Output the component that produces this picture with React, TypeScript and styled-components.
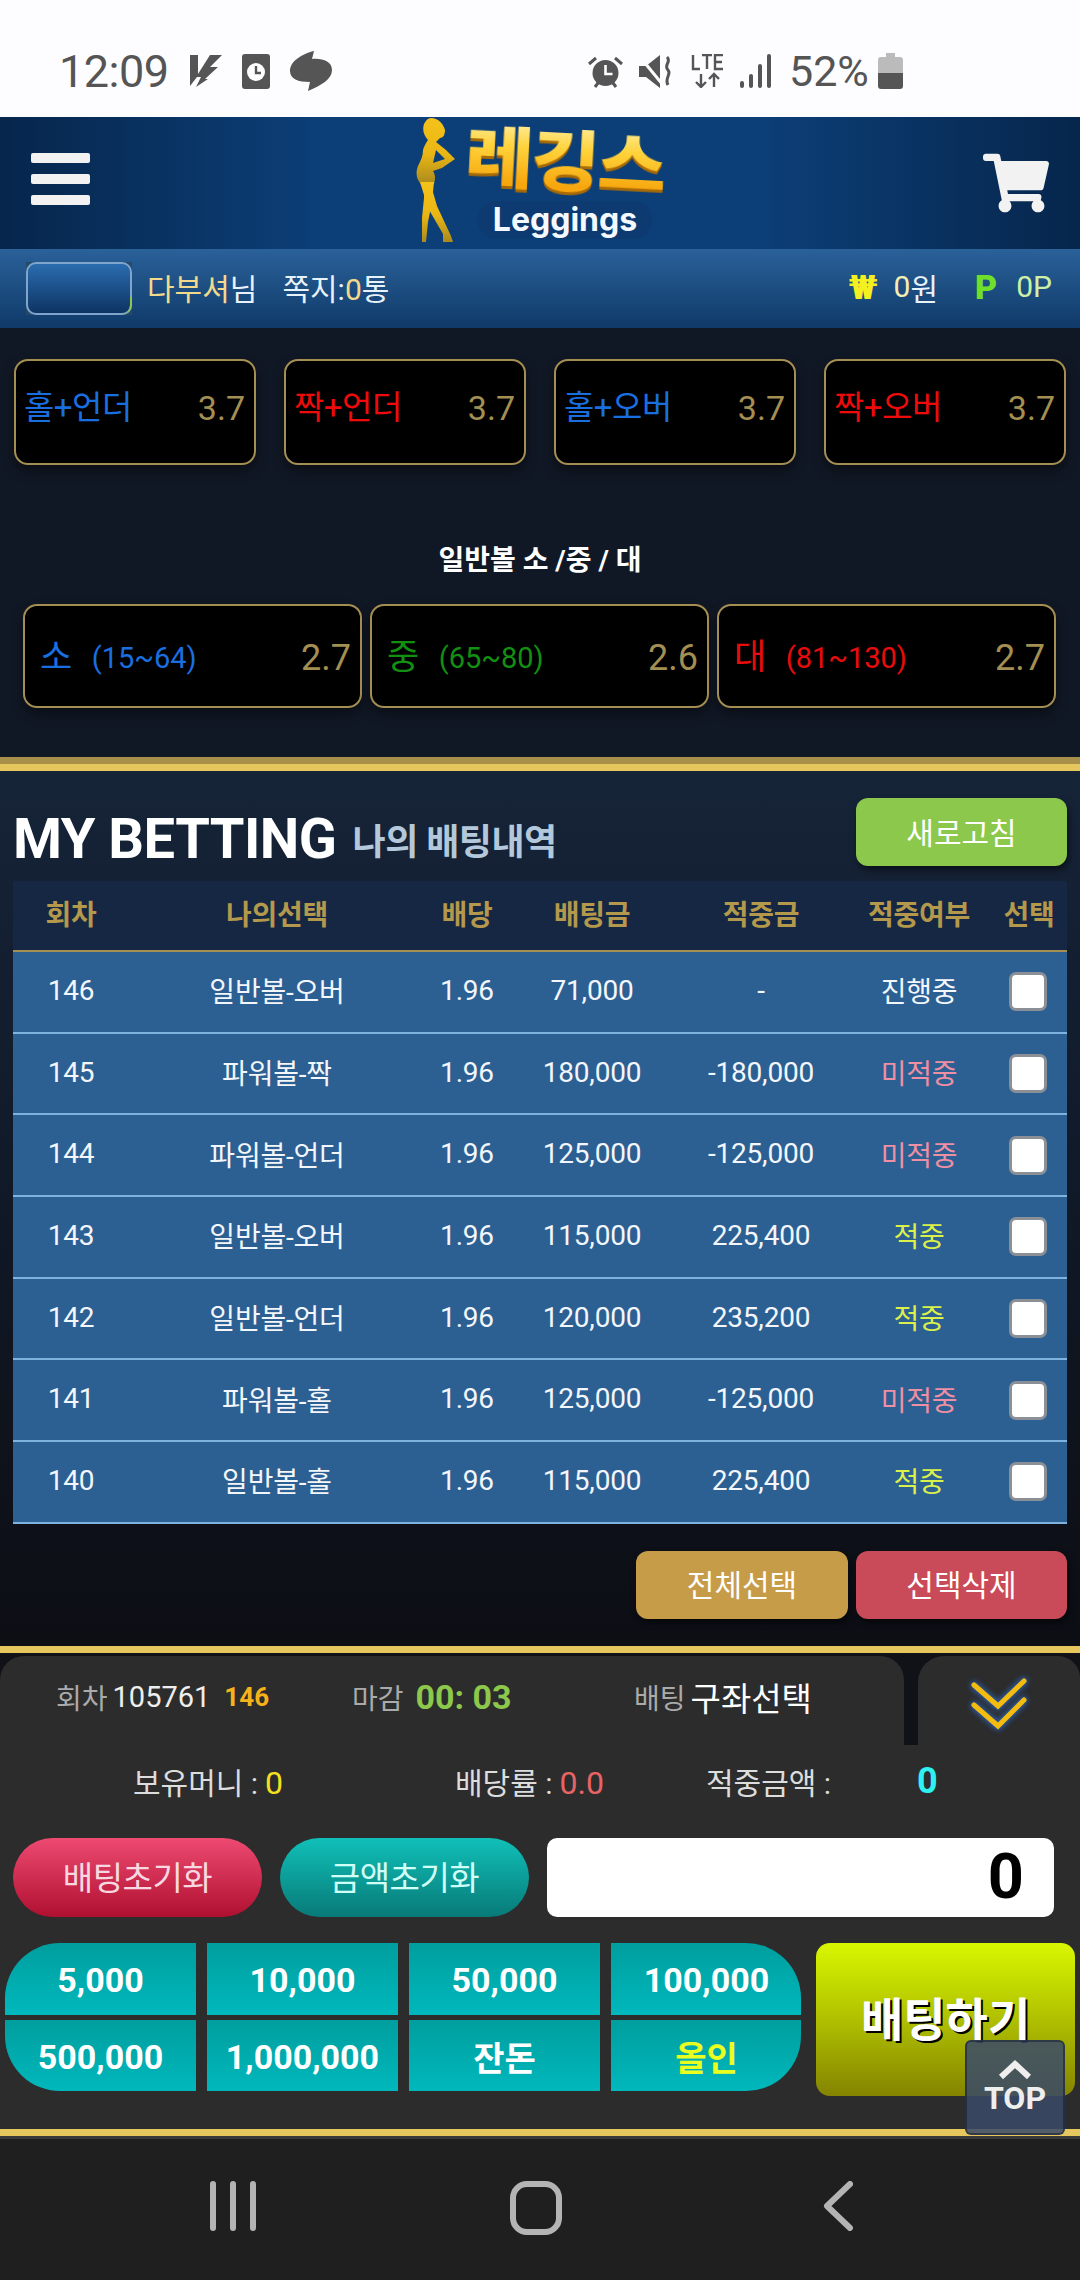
import React from 'react';
import styled, { createGlobalStyle } from 'styled-components';
import { FaShoppingCart } from 'react-icons/fa';

const fontStack = `Roboto, "Noto Sans CJK KR", sans-serif`;

const colors = {
  gold: '#a48f52',
  goldBar: '#e6c75e',
  goldText: '#f3d98b',
  blue: '#1a6fe0',
  red: '#ee0b0b',
  green: '#129012',
  lime: '#8cc84b',
  panel: '#2c2c2c',
  row: '#2c6093',
  rowLine: '#7db3de',
};

const GlobalStyle = createGlobalStyle`
  html, body { margin: 0; padding: 0; background: #1f1f1f; }
  body { font-family: ${fontStack}; }
  * { box-sizing: border-box; }
`;

const Page = styled.div`
  width: 1080px;
  height: 2280px;
  display: flex;
  flex-direction: column;
  position: relative;
  overflow: hidden;
`;

/* status bar */
const StatusBar = styled.div`
  height: 117px;
  background: #fdfdff;
  display: flex;
  align-items: center;
  padding: 25px 0 0 59px;
  color: #555;
`;

const Clock = styled.span`
  font-size: 45px;
  line-height: 1;
  width: 131px;
  letter-spacing: -0.5px;
`;

const StatusLeft = styled.div`
  display: flex;
  align-items: center;
  gap: 20px;
  width: 398px;
`;

const StatusRight = styled.div`
  display: flex;
  align-items: center;
  gap: 16px;
`;

const Percent = styled.span`
  font-size: 43px;
  line-height: 1;
  margin-left: 1px;
  margin-right: -7px;
`;

/* header */
const Header = styled.header`
  height: 132px;
  padding: 0 31px;
  display: flex;
  align-items: center;
  justify-content: space-between;
  background: linear-gradient(90deg, #06264c 0%, #0c3f78 30%, #0c3f78 70%, #06264c 100%);
`;

const Burger = styled.div`
  width: 59px;
  display: flex;
  flex-direction: column;
  gap: 11px;
  margin-top: -8px;

  span {
    height: 10px;
    border-radius: 2px;
    background: #f2f2f2;
  }
`;

const Logo = styled.div`
  display: flex;
  gap: 10px;
  align-self: flex-start;
  padding-top: 1px;
  margin-left: 8px;
`;

const LogoWords = styled.div`
  display: flex;
  flex-direction: column;
  align-items: center;
  width: 200px;
`;

const LogoKorean = styled.div`
  font-family: "Noto Sans CJK KR", sans-serif;
  font-weight: 900;
  font-size: 66px;
  line-height: 76px;
  letter-spacing: -2px;
  transform: rotate(3deg) scaleX(1.13);
  background: linear-gradient(180deg, #fff3b0 0%, #ffd23a 42%, #f7a60d 90%);
  -webkit-background-clip: text;
  background-clip: text;
  color: transparent;
  filter: drop-shadow(0 3px 0 #a86a05);
`;

const LogoLatin = styled.div`
  margin-top: 7px;
  padding: 0 15px;
  border-radius: 18px;
  background: #0d3b71;
  color: #f4f8ff;
  font-family: Inter, sans-serif;
  font-weight: 700;
  font-size: 32px;
  line-height: 38px;
`;

const Cart = styled.div`
  display: flex;
  color: #f2f2f2;
  margin-top: -1px;
`;

/* user bar */
const UserBar = styled.div`
  height: 79px;
  display: flex;
  align-items: center;
  padding: 0 28px 4px 26px;
  font-size: 30px;
  color: #e8f2fb;
  background: linear-gradient(180deg, #2a6199 0%, #0f3a69 100%);
`;

const BadgeFrame = styled.div`
  width: 106px;
  height: 53px;
  margin: 4px 15px 0 0;
  background: #24496b;
`;

const UserBadge = styled.div`
  position: relative;
  height: 100%;
  border: 2px solid #7fa5cc;
  border-radius: 10px;
  background: linear-gradient(180deg, #2a6cae 0%, #0e3464 100%);

  &::after {
    content: '';
    position: absolute;
    right: -2px;
    bottom: -2px;
    width: 12px;
    height: 18px;
    border-right: 2px solid ${colors.lime};
    border-bottom-right-radius: 10px;
  }
`;

const Gold = styled.span`
  color: ${colors.goldText};
`;

const Note = styled.span`
  margin-left: 25px;
`;

const Wallet = styled.div`
  margin-left: auto;
  display: flex;
  align-items: center;
`;

const Coin = styled.span<{ $tone: string; $gap: number; $lead?: number }>`
  font-size: 34px;
  font-weight: 900;
  color: ${({ $tone }) => $tone};
  margin-left: ${({ $lead }) => $lead || 0}px;
  margin-right: ${({ $gap }) => $gap}px;
`;

const Amount = styled.span<{ $tone: string }>`
  color: ${({ $tone }) => $tone};
`;

/* odds */
const OddsSection = styled.section`
  height: 429px;
  padding-top: 31px;
  background: #111825;
`;

const ComboRow = styled.div`
  display: grid;
  grid-template-columns: repeat(4, 242px);
  gap: 28px;
  padding-left: 14px;
`;

const OddsCard = styled.div<{ $h: number; $pad: number }>`
  height: ${({ $h }) => $h}px;
  background: #000;
  border: 2px solid ${colors.gold};
  border-radius: 14px;
  display: flex;
  align-items: center;
  padding: 3px 9px 0 ${({ $pad }) => $pad}px;
  box-shadow: 0 6px 12px rgba(0, 0, 0, 0.45);
`;

const ComboCard = styled(OddsCard)`
  align-items: flex-start;
  padding-top: 25px;
`;

const OddsLabel = styled.span<{ $tone: string; $size: number }>`
  color: ${({ $tone }) => $tone};
  font-size: ${({ $size }) => $size}px;
  letter-spacing: -0.5px;
  line-height: 44px;
`;

const OddsRange = styled.span<{ $tone: string }>`
  color: ${({ $tone }) => $tone};
  font-size: 29px;
  margin-left: 20px;
`;

const OddsValue = styled.span<{ $size: number }>`
  margin-left: auto;
  color: ${colors.gold};
  font-size: ${({ $size }) => $size}px;
  line-height: 44px;
`;

const BallTitle = styled.div`
  margin-top: 79px;
  height: 34px;
  text-align: center;
  color: #fff;
  font-size: 28px;
  line-height: 34px;
  font-weight: 700;
`;

const BallRow = styled.div`
  display: grid;
  grid-template-columns: repeat(3, 339px);
  gap: 8px;
  padding-left: 23px;
  margin-top: 26px;
`;

const GoldBar = styled.div<{ $h: number; $flat?: boolean }>`
  height: ${({ $h }) => $h}px;
  background: ${({ $flat }) =>
    $flat
      ? colors.goldBar
      : `linear-gradient(180deg, #a8904a 0%, #a8904a 48%, ${colors.goldBar} 52%, ${colors.goldBar} 100%)`};
`;

/* my betting */
const Betting = styled.section`
  height: 875px;
  padding: 0 13px;
  background: linear-gradient(180deg, #162438 0%, #111b2b 40%, #0f131c 75%, #0c0e14 100%);
`;

const TitleRow = styled.div`
  height: 110px;
  display: flex;
  align-items: flex-start;
`;

const Title = styled.h1`
  margin: 38px 0 0 0;
  color: #fff;
  font-size: 56px;
  line-height: 60px;
  font-weight: 700;
  letter-spacing: -0.5px;
`;

const SubTitle = styled.span`
  margin: 44px 0 0 16px;
  color: #b4c8dc;
  font-size: 36px;
  line-height: 56px;
  font-weight: 700;
  letter-spacing: -0.5px;
`;

const ActionButton = styled.button<{ $tone: string; $w: number }>`
  width: ${({ $w }) => $w}px;
  height: 68px;
  border: 0;
  border-radius: 12px;
  background: ${({ $tone }) => $tone};
  color: #fff;
  font-family: inherit;
  font-size: 30px;
  padding-bottom: 4px;
  box-shadow: 2px 4px 6px rgba(0, 0, 0, 0.5);
`;

const RefreshButton = styled(ActionButton)`
  margin: 27px 0 0 auto;
`;

const cols = '116px 296px 84px 166px 172px 144px 76px';

const TableHead = styled.div`
  display: grid;
  grid-template-columns: ${cols};
  height: 71px;
  align-items: center;
  text-align: center;
  background: #152743;
  border-bottom: 2px solid ${colors.gold};
  color: #b4984c;
  font-size: 28px;
  font-weight: 700;
  letter-spacing: -0.3px;
  padding-bottom: 6px;
`;

const TableRow = styled.div`
  display: grid;
  grid-template-columns: ${cols};
  height: 81.7px;
  align-items: center;
  text-align: center;
  background: ${colors.row};
  border-bottom: 2px solid ${colors.rowLine};
  color: #f3f6fa;
  font-size: 28px;
  letter-spacing: -0.2px;
  padding-bottom: 3px;
`;

const Result = styled.span<{ $tone: string }>`
  color: ${({ $tone }) => $tone};
`;

const Check = styled.span`
  justify-self: center;
  width: 38px;
  height: 39px;
  background: #fff;
  border: 3px solid #8b8f96;
  border-radius: 7px;
  margin: 3px 2px 0 0;
`;

const TableActions = styled.div`
  display: flex;
  justify-content: flex-end;
  gap: 8px;
  margin-top: 27px;
`;

/* bet slip */
const Slip = styled.section`
  height: 476px;
  position: relative;
  border-top: 3px solid #101218;
  background: ${colors.panel};
`;

const SlipTop = styled.div`
  height: 89px;
  display: flex;
  background: #101218;
`;

const RoundTab = styled.div`
  width: 904px;
  display: flex;
  align-items: center;
  padding: 0 0 8px 56px;
  background: ${colors.panel};
  border-top-left-radius: 24px;
  border-top-right-radius: 24px;
  font-size: 28px;
  color: #aaa;
`;

const TabGroup = styled.div<{ $w: number }>`
  width: ${({ $w }) => $w}px;
  display: flex;
  align-items: center;
`;

const TabValue = styled.span<{ $tone: string; $size: number; $bold?: boolean; $gap: number }>`
  color: ${({ $tone }) => $tone};
  font-size: ${({ $size }) => $size}px;
  font-weight: ${({ $bold }) => ($bold ? 700 : 400)};
  margin-left: ${({ $gap }) => $gap}px;
`;

const ToggleTab = styled.div`
  width: 162px;
  margin-left: 14px;
  display: flex;
  justify-content: center;
  padding-top: 22px;
  background: ${colors.panel};
  border-top-left-radius: 26px;
  border-top-right-radius: 22px;

  svg {
    filter: drop-shadow(0 0 3px #2c5aa0) drop-shadow(0 0 1px #2c5aa0);
  }
`;

const Summary = styled.div`
  height: 93px;
  display: grid;
  grid-template-columns: 322px 251px 211px 1fr;
  align-items: center;
  padding: 0 0 22px 133px;
  font-size: 30px;
  color: #ddd;
`;

const SummaryValue = styled.span<{ $tone: string; $gap: number }>`
  color: ${({ $tone }) => $tone};
  font-size: 32px;
  margin-left: ${({ $gap }) => $gap}px;
`;

const WinValue = styled.span`
  color: #2ef2f2;
  font-size: 36px;
  font-weight: 700;
`;

const ControlRow = styled.div`
  display: flex;
  height: 79px;
  padding-left: 13px;
`;

const PillButton = styled.button<{ $from: string; $to: string; $ink: string; $gap: number }>`
  width: 249px;
  margin-right: ${({ $gap }) => $gap}px;
  border: 0;
  border-radius: 40px;
  background: linear-gradient(180deg, ${({ $from }) => $from}, ${({ $to }) => $to});
  color: ${({ $ink }) => $ink};
  font-family: inherit;
  font-size: 33px;
  letter-spacing: -0.5px;
  padding-bottom: 5px;
`;

const AmountBox = styled.div`
  width: 507px;
  border-radius: 10px;
  background: #fff;
  color: #000;
  font-size: 63px;
  font-weight: 700;
  line-height: 77px;
  text-align: right;
  padding-right: 30px;
`;

const BetArea = styled.div`
  display: flex;
  align-items: flex-start;
  padding: 26px 5px 0;
`;

const ChipGrid = styled.div`
  display: grid;
  grid-template-columns: repeat(4, 191px);
  grid-template-rows: 72px 71px;
  gap: 5px 11px;
  border-radius: 55px;
  overflow: hidden;
`;

const Chip = styled.div<{ $tone?: string }>`
  display: flex;
  align-items: center;
  justify-content: center;
  padding-top: 2px;
  background: linear-gradient(180deg, #009e9e, #00b8bc);
  color: ${({ $tone }) => $tone || '#fff'};
  font-size: 34px;
  font-weight: 700;
`;

const BetButton = styled.button`
  width: 259px;
  height: 153px;
  margin-left: 15px;
  border: 0;
  border-radius: 14px;
  background: linear-gradient(180deg, #d9f700 0%, #b0c000 50%, #848400 100%);
  color: #fff;
  font-family: inherit;
  font-size: 46px;
  font-weight: 700;
  text-shadow: 2px 2px 0 #000;
  padding: 0 0 8px;
  white-space: nowrap;
`;

const TopButton = styled.div`
  position: absolute;
  left: 965px;
  top: 384px;
  width: 100px;
  height: 95px;
  z-index: 2;
  border: 2px solid rgba(20, 30, 50, 0.55);
  border-radius: 6px;
  background: rgba(58, 74, 104, 0.85);
  display: flex;
  flex-direction: column;
  align-items: center;
  padding-top: 16px;
  color: #eee;
  font-size: 32px;
  font-weight: 700;
  line-height: 36px;
`;

/* nav bar */
const NavBar = styled.nav`
  height: 141px;
  flex: none;
  background: #1f1f1f;
  border-top: 3px solid #3a3a3a;
  display: flex;
  align-items: flex-start;
  padding-top: 42px;
  color: #b4b4b4;
`;

const NavSlot = styled.div<{ $w: number; $pad: number }>`
  width: ${({ $w }) => $w}px;
  padding-left: ${({ $pad }) => $pad}px;
  display: flex;
`;

const combos = [
  { label: '홀+언더', tone: colors.blue },
  { label: '짝+언더', tone: colors.red },
  { label: '홀+오버', tone: colors.blue },
  { label: '짝+오버', tone: colors.red },
];

const balls = [
  { label: '소', range: '(15~64)', odds: '2.7', tone: colors.blue },
  { label: '중', range: '(65~80)', odds: '2.6', tone: colors.green },
  { label: '대', range: '(81~130)', odds: '2.7', tone: '#e80c0c' },
];

const lost = '#ee8fa3';
const won = '#dcf04a';

const bets = [
  { round: 146, pick: '일반볼-오버', stake: '71,000', payout: '-', result: '진행중', tone: '#f3f6fa' },
  { round: 145, pick: '파워볼-짝', stake: '180,000', payout: '-180,000', result: '미적중', tone: lost },
  { round: 144, pick: '파워볼-언더', stake: '125,000', payout: '-125,000', result: '미적중', tone: lost },
  { round: 143, pick: '일반볼-오버', stake: '115,000', payout: '225,400', result: '적중', tone: won },
  { round: 142, pick: '일반볼-언더', stake: '120,000', payout: '235,200', result: '적중', tone: won },
  { round: 141, pick: '파워볼-홀', stake: '125,000', payout: '-125,000', result: '미적중', tone: lost },
  { round: 140, pick: '일반볼-홀', stake: '115,000', payout: '225,400', result: '적중', tone: won },
];

const chips = ['5,000', '10,000', '50,000', '100,000', '500,000', '1,000,000', '잔돈', '올인'];

const App: React.FC = () => (
  <Page>
    <GlobalStyle />
    <StatusBar>
      <Clock>12:09</Clock>
      <StatusLeft>
        <svg width="32" height="32" viewBox="0 0 32 32" fill="#555">
          <path d="M0 0h8v19L20 0h12L20 12h8L15 24h3L6 32l5-10H7L0 31z" />
        </svg>
        <svg width="28" height="35" viewBox="0 0 28 35">
          <rect width="28" height="35" rx="3" fill="#555" />
          <circle cx="14" cy="18" r="9" fill="#fff" />
          <path d="M14 12v7h5" fill="none" stroke="#555" strokeWidth="2.400" />
        </svg>
        <svg width="42" height="40" viewBox="0 0 42 40" fill="#555">
          <path d="M24 0L22 8C32 7 42 10 42 19C42 28 32 34 18 40L20 31C8 31 0 28 0 20C0 10 12 3 24 0Z" />
        </svg>
      </StatusLeft>
      <StatusRight>
        <svg width="35" height="33" viewBox="0 0 35 33">
          <circle cx="17.500" cy="18" r="13" fill="#555" />
          <path d="M17.500 10v9h7" fill="none" stroke="#fff" strokeWidth="2.600" />
          <path d="M1 9l7-6M34 9l-7-6M7 32l3-4M28 32l-3-4" stroke="#555" strokeWidth="3" />
        </svg>
        <svg width="36" height="33" viewBox="0 0 36 33" fill="#555">
          <path d="M0 11h7L21 0v33L7 22H0z" />
          <path d="M1 2l23 28" stroke="#fdfdff" strokeWidth="3" />
          <path d="M28 2c5 5-4 8 1 13c4 4-4 8 0 15" fill="none" stroke="#555" strokeWidth="3" />
        </svg>
        <svg width="33" height="34" viewBox="0 0 33 34" fill="none" stroke="#555" strokeWidth="2.400">
          <path d="M2 1v14h7M11 1h10M16 1v14M32 1h-8v14h8M24 8h7" />
          <path d="M10 20v13M5 28l5 5 5-5M23 33V20M18 25l5-5 5 5" />
        </svg>
        <svg width="32" height="35" viewBox="0 0 32 35" fill="#555">
          <rect x="0" y="27" width="4" height="7" rx="2" />
          <rect x="9" y="20" width="4" height="14" rx="2" />
          <rect x="18" y="10" width="4" height="24" rx="2" />
          <rect x="27" y="0" width="4" height="34" rx="2" />
        </svg>
        <Percent>52%</Percent>
        <svg width="25" height="36" viewBox="0 0 25 36">
          <path d="M8 0h9v4h5a3 3 0 0 1 3 3v13H0V7a3 3 0 0 1 3-3h5z" fill="#bbb" />
          <path d="M0 20h25v13a3 3 0 0 1-3 3H3a3 3 0 0 1-3-3z" fill="#555" />
        </svg>
      </StatusRight>
    </StatusBar>

    <Header>
      <Burger>
        <span />
        <span />
        <span />
      </Burger>
      <Logo>
        <svg width="39" height="126" viewBox="0 0 39 126">
          <defs>
            <linearGradient id="figure" x1="0" y1="0" x2="0" y2="1">
              <stop offset="0" stopColor="#f5c21a" />
              <stop offset="0.55" stopColor="#eab614" />
              <stop offset="1" stopColor="#a98a1e" />
            </linearGradient>
          </defs>
          <path
            fill="url(#figure)"
            fillRule="evenodd"
            d="M15 0C22 0 27 5 29 12C29 17 27 20 24 20L20 24L30 32L39 41L26 50L17 53C20 58 19 62 18 66L5 66C1 62 -1 56 2 48C5 42 7 38 7 32C8 28 10 25 12 22C8 18 6 12 8 6C10 2 12 0 15 0ZM20 32L17 45L29 41Z"
          />
          <path fill="url(#figure)" d="M4 64L14 64L21 88L35 118L37 124L27 124L27 116L12 90Z" />
          <path fill="url(#figure)" d="M18 64L16 84L12 104L10 124L6 124L6 100L8 80L8 64Z" />
        </svg>
        <LogoWords>
          <LogoKorean>레깅스</LogoKorean>
          <LogoLatin>Leggings</LogoLatin>
        </LogoWords>
      </Logo>
      <Cart>
        <FaShoppingCart size={66} />
      </Cart>
    </Header>

    <UserBar>
      <BadgeFrame>
        <UserBadge />
      </BadgeFrame>
      <Gold>다부셔</Gold>님
      <Note>
        쪽지:<Gold>0</Gold>통
      </Note>
      <Wallet>
        <Coin $tone="#f4f020" $gap={16}>₩</Coin>
        <Amount $tone="#f6eeb0">0</Amount>원
        <Coin $tone="#6fe02a" $gap={19} $lead={37}>P</Coin>
        <Amount $tone="#cdf0a8">0P</Amount>
      </Wallet>
    </UserBar>

    <OddsSection>
      <ComboRow>
        {combos.map(c => (
          <ComboCard key={c.label} $h={106} $pad={8}>
            <OddsLabel $tone={c.tone} $size={33}>{c.label}</OddsLabel>
            <OddsValue $size={34}>3.7</OddsValue>
          </ComboCard>
        ))}
      </ComboRow>
      <BallTitle>일반볼 소 /중 / 대</BallTitle>
      <BallRow>
        {balls.map(b => (
          <OddsCard key={b.label} $h={104} $pad={15}>
            <OddsLabel $tone={b.tone} $size={35}>{b.label}</OddsLabel>
            <OddsRange $tone={b.tone}>{b.range}</OddsRange>
            <OddsValue $size={36}>{b.odds}</OddsValue>
          </OddsCard>
        ))}
      </BallRow>
    </OddsSection>
    <GoldBar $h={14} />

    <Betting>
      <TitleRow>
        <Title>MY BETTING</Title>
        <SubTitle>나의 배팅내역</SubTitle>
        <RefreshButton $tone={colors.lime} $w={211}>새로고침</RefreshButton>
      </TitleRow>
      <TableHead>
        <span>회차</span>
        <span>나의선택</span>
        <span>배당</span>
        <span>배팅금</span>
        <span>적중금</span>
        <span>적중여부</span>
        <span>선택</span>
      </TableHead>
      {bets.map(b => (
        <TableRow key={b.round}>
          <span>{b.round}</span>
          <span>{b.pick}</span>
          <span>1.96</span>
          <span>{b.stake}</span>
          <span>{b.payout}</span>
          <Result $tone={b.tone}>{b.result}</Result>
          <Check />
        </TableRow>
      ))}
      <TableActions>
        <ActionButton $tone="#c69c49" $w={212}>전체선택</ActionButton>
        <ActionButton $tone="#c94a58" $w={211}>선택삭제</ActionButton>
      </TableActions>
    </Betting>
    <GoldBar $h={7} $flat />

    <Slip>
      <SlipTop>
        <RoundTab>
          <TabGroup $w={296}>
            회차
            <TabValue $tone="#eee" $size={29} $gap={5}>105761</TabValue>
            <TabValue $tone="#f5b21a" $size={26} $bold $gap={14}>146</TabValue>
          </TabGroup>
          <TabGroup $w={282}>
            마감
            <TabValue $tone={colors.lime} $size={34} $bold $gap={12}>00: 03</TabValue>
          </TabGroup>
          <TabGroup $w={220}>
            배팅
            <TabValue $tone="#fff" $size={33} $gap={5}>구좌선택</TabValue>
          </TabGroup>
        </RoundTab>
        <ToggleTab>
          <svg width="56" height="54" viewBox="0 0 56 54" fill="none">
            <path d="M3 7l24 21L53 3M3 27l24 21L53 22" stroke="#f5bc10" strokeWidth="5" strokeLinecap="round" />
          </svg>
        </ToggleTab>
      </SlipTop>
      <Summary>
        <span>
          보유머니 :<SummaryValue $tone="#f5e020" $gap={7}>0</SummaryValue>
        </span>
        <span>
          배당률 :<SummaryValue $tone="#e86464" $gap={7}>0.0</SummaryValue>
        </span>
        <span>적중금액 :</span>
        <WinValue>0</WinValue>
      </Summary>
      <ControlRow>
        <PillButton $from="#ee4a72" $to="#b01030" $ink="#f8d8e0" $gap={18}>배팅초기화</PillButton>
        <PillButton $from="#10c0b8" $to="#087a78" $ink="#d0fff8" $gap={18}>금액초기화</PillButton>
        <AmountBox>0</AmountBox>
      </ControlRow>
      <BetArea>
        <ChipGrid>
          {chips.map(c => (
            <Chip key={c} $tone={c === '올인' ? '#e8ff20' : undefined}>{c}</Chip>
          ))}
        </ChipGrid>
        <BetButton>배팅하기</BetButton>
      </BetArea>
      <TopButton>
        <svg width="34" height="22" viewBox="0 0 34 22" fill="none">
          <path d="M3 19L17 6l14 13" stroke="#eee" strokeWidth="6" />
        </svg>
        TOP
      </TopButton>
    </Slip>
    <GoldBar $h={7} $flat />

    <NavBar>
      <NavSlot $w={510} $pad={210}>
        <svg width="46" height="50" viewBox="0 0 46 50" fill="currentColor">
          <rect x="0" y="0" width="6" height="50" rx="3" />
          <rect x="20" y="0" width="6" height="50" rx="3" />
          <rect x="40" y="0" width="6" height="50" rx="3" />
        </svg>
      </NavSlot>
      <NavSlot $w={313} $pad={0}>
        <svg width="52" height="54" viewBox="0 0 52 54" fill="none">
          <rect x="3" y="3" width="46" height="48" rx="14" stroke="currentColor" strokeWidth="6" />
        </svg>
      </NavSlot>
      <NavSlot $w={40} $pad={0}>
        <svg width="30" height="50" viewBox="0 0 30 50" fill="none">
          <path d="M27 3L4 25l23 22" stroke="currentColor" strokeWidth="6" strokeLinecap="round" strokeLinejoin="round" />
        </svg>
      </NavSlot>
    </NavBar>
  </Page>
);

export default App;
